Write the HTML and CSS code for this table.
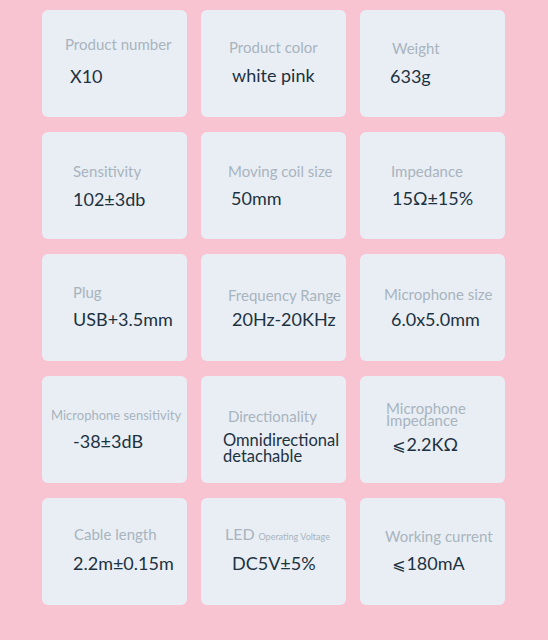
FILE: index.html
```html
<!DOCTYPE html>
<html>
<head>
<meta charset="utf-8">
<link rel="stylesheet" href="styles.css">
</head>
<body>
<div class="grid">
  <div class="card k11"><div class="label">Product number</div><div class="value">X10</div></div>
  <div class="card k12"><div class="label">Product color</div><div class="value">white pink</div></div>
  <div class="card k13"><div class="label">Weight</div><div class="value">633g</div></div>

  <div class="card k21"><div class="label">Sensitivity</div><div class="value">102±3db</div></div>
  <div class="card k22"><div class="label">Moving coil size</div><div class="value">50mm</div></div>
  <div class="card k23"><div class="label">Impedance</div><div class="value">15Ω±15%</div></div>

  <div class="card k31"><div class="label">Plug</div><div class="value">USB+3.5mm</div></div>
  <div class="card k32"><div class="label">Frequency Range</div><div class="value">20Hz-20KHz</div></div>
  <div class="card k33"><div class="label">Microphone size</div><div class="value">6.0x5.0mm</div></div>

  <div class="card k41"><div class="label label-sm">Microphone sensitivity</div><div class="value">-38±3dB</div></div>
  <div class="card k42"><div class="label">Directionality</div><div class="value value-wrap">Omnidirectional<br>detachable</div></div>
  <div class="card k43"><div class="label label-tight">Microphone<br>Impedance</div><div class="value"><span class="le">⩽</span>2.2KΩ</div></div>

  <div class="card k51"><div class="label">Cable length</div><div class="value">2.2m±0.15m</div></div>
  <div class="card k52"><div class="label label-led"><span class="led">LED</span> <span class="led-sub">Operating Voltage</span></div><div class="value">DC5V±5%</div></div>
  <div class="card k53"><div class="label">Working current</div><div class="value"><span class="le">⩽</span>180mA</div></div>
</div>
</body>
</html>
```
FILE: styles.css
```css
html, body {
  margin: 0;
  padding: 0;
  background: #f9c4d2;
}
body {
  width: 548px;
  height: 640px;
  overflow: hidden;
  font-family: "Lato", "Noto Sans", sans-serif;
}
.grid {
  display: grid;
  grid-template-columns: repeat(3, 145px);
  grid-auto-rows: 107px;
  column-gap: 14px;
  row-gap: 15px;
  padding: 10px 0 0 42px;
}
.card {
  background: #e9eef5;
  border-radius: 6px;
  display: flex;
  flex-direction: column;
  align-items: flex-start;
  --lt: 28px;
  --lx: 28px;
  --vt: 55px;
  --vx: 30px;
  --lh: 20px;
}
.label {
  color: #a8b4be;
  font-size: 15px;
  line-height: 20px;
  height: var(--lh);
  margin-top: var(--lt);
  margin-left: var(--lx);
  white-space: nowrap;
}
.value {
  color: #1d3241;
  font-size: 18px;
  line-height: 22px;
  margin-top: calc(var(--vt) - var(--lt) - var(--lh));
  margin-left: var(--vx);
  white-space: nowrap;
}
.value-wrap {
  line-height: 16px;
  font-size: 16.5px;
}
.label-sm { font-size: 13px; }
.label-tight { font-size: 15px; line-height: 12px; --lh: 22px; }
.led { font-size: 16px; }
.led-sub { font-size: 9px; }
.le { font-family: "DejaVu Sans", sans-serif; font-size: 16px; margin-right: 1px; }

.k11 { --lt: 24px; --lx: 23px; --vt: 55px; --vx: 28px; }
.k12 { --lt: 27px; --lx: 28px; --vt: 54px; --vx: 31px; }
.k13 { --lt: 28px; --lx: 32px; --vt: 55px; --vx: 30px; }
.k21 { --lt: 29px; --lx: 31px; --vt: 56px; --vx: 31px; }
.k22 { --lt: 29px; --lx: 27px; --vt: 55px; --vx: 30px; }
.k23 { --lt: 29px; --lx: 31px; --vt: 55px; --vx: 32px; }
.k31 { --lt: 28px; --lx: 31px; --vt: 54px; --vx: 31px; }
.k32 { --lt: 31px; --lx: 27px; --vt: 54px; --vx: 31px; }
.k33 { --lt: 30px; --lx: 24px; --vt: 54px; --vx: 31px; }
.k41 { --lt: 29px; --lx: 9px; --vt: 54px; --vx: 31px; }
.k42 { --lt: 30px; --lx: 27px; --vt: 56px; --vx: 22px; }
.k43 { --lt: 26px; --lx: 26px; --vt: 55px; --vx: 32px; }
.k51 { --lt: 26px; --lx: 32px; --vt: 54px; --vx: 31px; }
.k52 { --lt: 26px; --lx: 24px; --vt: 54px; --vx: 31px; }
.k53 { --lt: 28px; --lx: 25px; --vt: 54px; --vx: 32px; }
```
